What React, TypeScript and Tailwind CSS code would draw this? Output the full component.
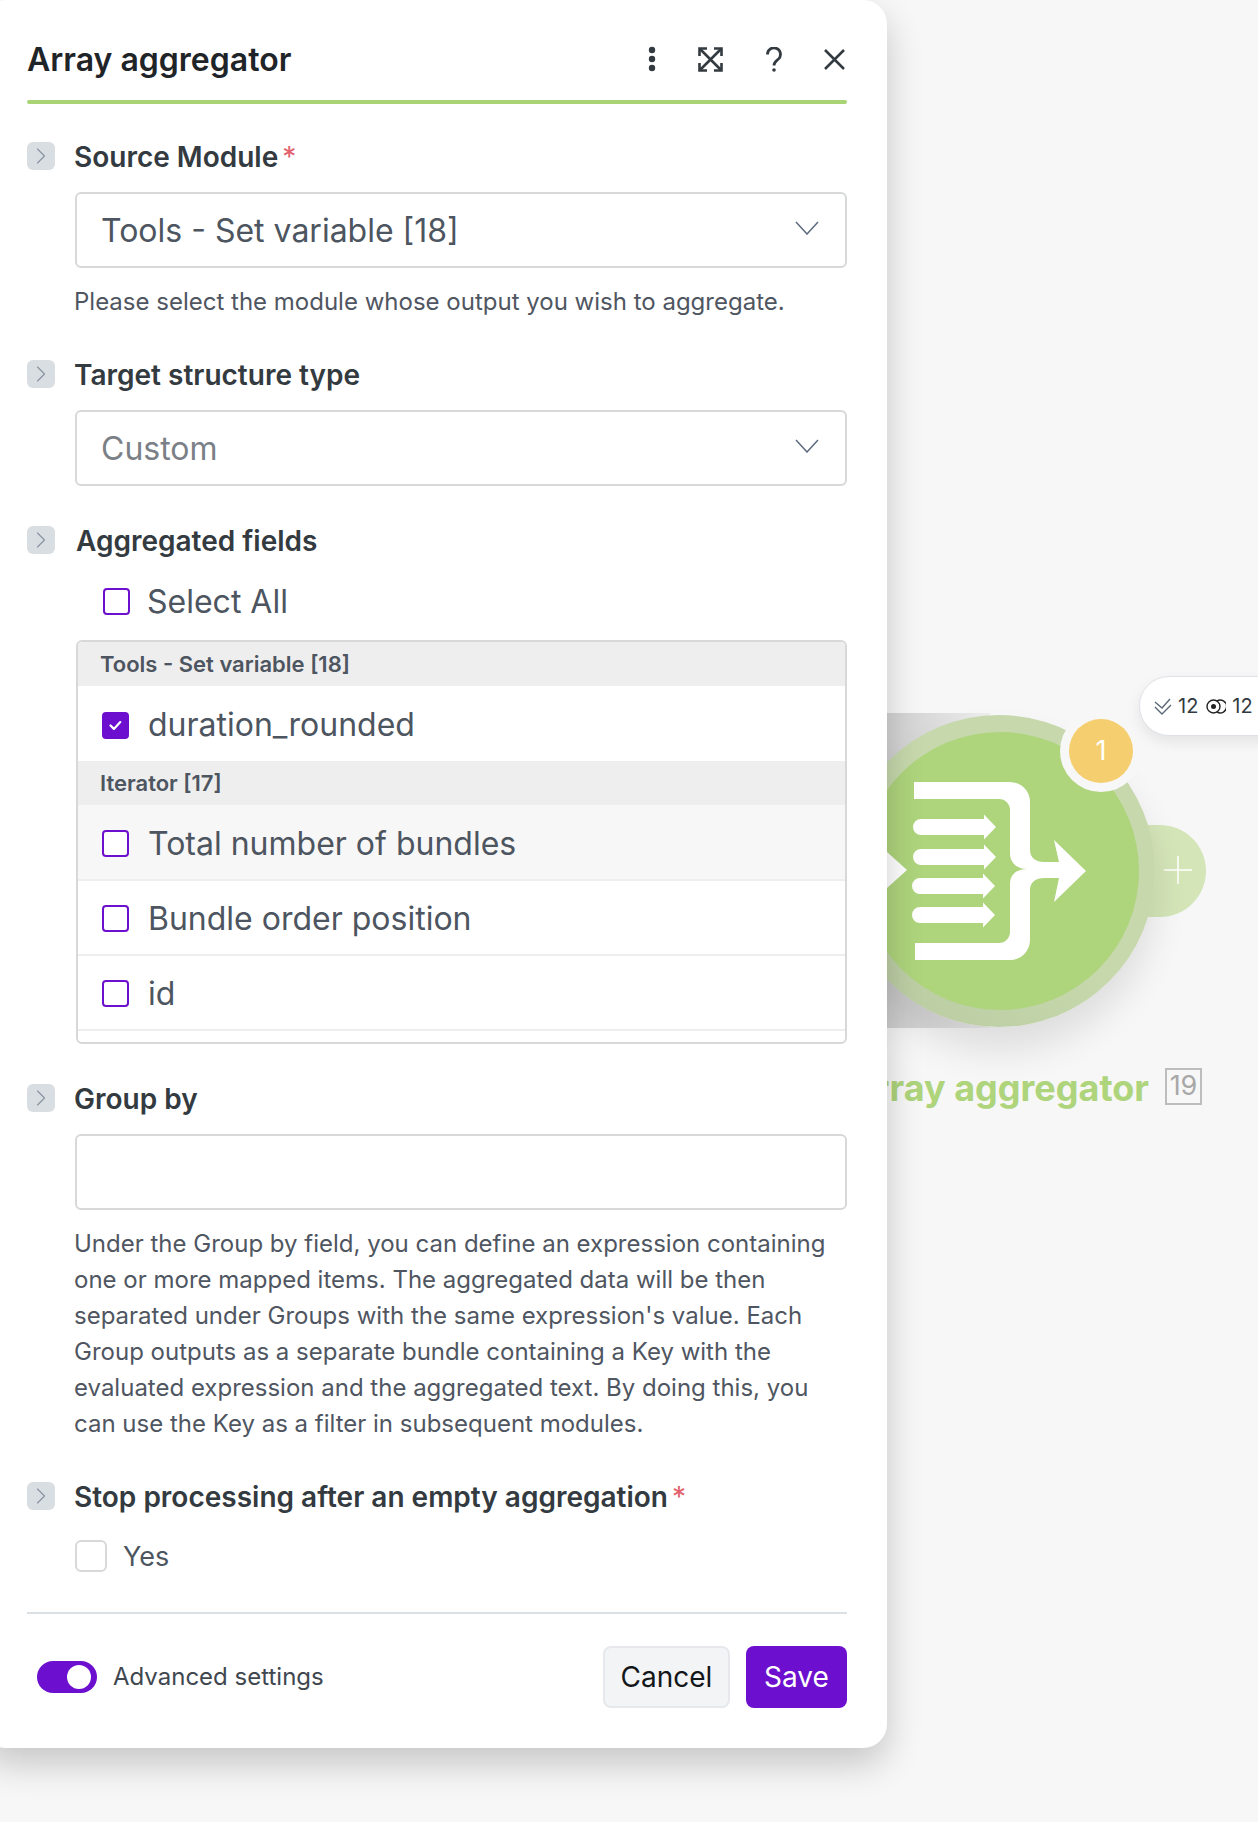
import { ChevronRight, Plus } from 'lucide-react';

const helpText =
  "Under the Group by field, you can define an expression containing one or more mapped items. The aggregated data will be then separated under Groups with the same expression's value. Each Group outputs as a separate bundle containing a Key with the evaluated expression and the aggregated text. By doing this, you can use the Key as a filter in subsequent modules.";

function Tag() {
  return (
    <div className="w-7 h-7 shrink-0 rounded-md bg-[#d9dee3] flex items-center justify-center text-[#8a94a0]">
      <ChevronRight size={28} strokeWidth={1} className="shrink-0" />
    </div>
  );
}

function FieldLabel({ text, required, indent }: { text: string; required?: boolean; indent?: boolean }) {
  return (
    <div className="flex items-center h-7">
      <Tag />
      <span className={`${indent ? 'ml-[21px]' : 'ml-[19px]'} pt-px text-[28px] leading-7 font-semibold text-[#333a40]`}>{text}</span>
      {required && <span className="ml-1 pt-px text-[28px] leading-7 text-[#e2616c]">*</span>}
    </div>
  );
}

function SelectBox({ value, muted }: { value: string; muted?: boolean }) {
  return (
    <div className="ml-12 mt-[22px] h-[76px] rounded-md border-2 border-[#d6d8da] bg-white flex items-center justify-between pl-6 pr-[26px]">
      <span className={`pt-px text-[32px] ${muted ? 'text-[#7b8087]' : 'text-[#4d5560]'}`}>{value}</span>
      <svg className="mb-1" width="24" height="14" viewBox="0 0 24 14" fill="none" stroke="#5b6b7d" strokeWidth="1.5">
        <path d="M1 1l11 12L23 1" />
      </svg>
    </div>
  );
}

function PurpleBox({ checked }: { checked?: boolean }) {
  return (
    <div
      className={`w-[27px] h-[27px] shrink-0 rounded-[4px] border-2 border-[#6d0fce] flex items-center justify-center ${
        checked ? 'bg-[#6d0fce]' : 'bg-white'
      }`}
    >
      {checked && (
        <svg width="17" height="17" viewBox="0 0 17 17" fill="none">
          <path d="M3.5 8.5l3.4 3.4 6.4-6.8" stroke="#fff" strokeWidth="2.2" strokeLinecap="round" strokeLinejoin="round" />
        </svg>
      )}
    </div>
  );
}

function ListRow({ label, checked, tinted, height }: { label: string; checked?: boolean; tinted?: boolean; height: string }) {
  return (
    <div className={`flex items-center gap-[19px] pl-6 ${height} ${tinted ? 'bg-[#f7f7f7]' : 'bg-white'}`}>
      <PurpleBox checked={checked} />
      <span className="text-[32px] text-[#4d5560]">{label}</span>
    </div>
  );
}

function ListHeader({ label }: { label: string }) {
  return (
    <div className="h-[44px] bg-[#eeeeee] flex items-center pl-[22px] text-[22px] font-semibold text-[#4d5560]">{label}</div>
  );
}

function Canvas() {
  return (
    <div className="absolute inset-0">
      <div className="absolute left-[860px] top-[713px] w-[130px] h-[315px] bg-gradient-to-r from-[#cfcfcf] via-[#d9d9d9] to-[#eeeeee]" />
      <div className="absolute left-[1100px] top-[825px] w-[106px] h-[92px] rounded-full bg-[#d4e5b8]" />
      <Plus size={46} strokeWidth={0.8} className="absolute left-[1155px] top-[847px] text-white" />
      <div className="absolute left-[843px] top-[715px] w-[312px] h-[312px] rounded-full bg-gradient-to-tr from-[#b8c9a0] via-[#c6d8ac] to-[#c6d8ac] shadow-[0_24px_36px_rgba(0,0,0,0.1)]" />
      <div className="absolute left-[861px] top-[732px] w-[278px] h-[278px] rounded-full bg-[#aed47c]" />
      {/* aggregator glyph, drawn in page coordinates */}
      <svg className="absolute left-[880px] top-[770px]" width="220" height="200" viewBox="880 770 220 200" fill="#fff">
        <path d="M887 852l20 18-20 18z" />
        <path d="M914 782h96a20 20 0 0 1 20 20v48c0 8 6 12 14 12h15l-5-22 32 31-32 31 5-24h-15c-8 0-14 4-14 12v50a20 20 0 0 1-20 20h-95v-17h84a11 11 0 0 0 11-11v-48c0-9 6-15 17-15-11 0-17-7-17-16v-43a11 11 0 0 0-11-11h-85z" />
        <path d="M921 819h63v-4.5l12 12.5-12 12.5v-4.5h-63a8 8 0 0 1 0-16z" />
        <path d="M921 849h63v-4.5l12 12.5-12 12.5v-4.5h-63a8 8 0 0 1 0-16z" />
        <path d="M920 878h63v-4.5l12 12.5-12 12.5v-4.5h-63a8 8 0 0 1 0-16z" />
        <path d="M920 907h63v-4.5l12 12.5-12 12.5v-4.5h-63a8 8 0 0 1 0-16z" />
      </svg>
      <div className="absolute left-[1060px] top-[710px] w-[82px] h-[82px] rounded-full bg-[#f7f7f7] flex items-center justify-center">
        <div className="w-[64px] h-[64px] rounded-full bg-[#f5cf6f] flex items-center justify-center text-[27px] text-white">1</div>
      </div>
      <div className="absolute left-[1139px] top-[676px] w-[150px] h-[60px] rounded-[30px] border border-[#dfe3e8] bg-white shadow-[0_6px_14px_rgba(0,0,0,0.08)] flex items-center pl-[14px] text-[20px] text-[#333a40]">
        <svg width="18" height="17" viewBox="0 0 18 17" fill="none" stroke="#5a6878" strokeWidth="1.4">
          <path d="M1 4l7 6 8-9" />
          <path d="M1 9l7 7 9-9" />
        </svg>
        <span className="ml-[6px]">12</span>
        <svg className="ml-[8px]" width="20" height="15" viewBox="0 0 20 15" fill="none" stroke="#222" strokeWidth="1.4">
          <circle cx="7.5" cy="7.5" r="6.5" />
          <path d="M11 1.8a6.5 6.5 0 1 1 0 11.4" />
          <circle cx="7.5" cy="7.5" r="2.5" fill="#222" stroke="none" />
        </svg>
        <span className="ml-[6px]">12</span>
      </div>
      <div className="absolute right-[109px] top-[1066px] text-[36px] leading-[44px] font-bold text-[#aed47c] whitespace-nowrap">Array aggregator</div>
      <div className="absolute left-[1165px] top-[1068px] w-[37px] h-[37px] border-2 border-[#bdbdbd] flex items-center justify-center text-[27px] text-[#a8a8a8]">19</div>
    </div>
  );
}

export default function App() {
  return (
    <div className="relative w-[1258px] h-[1822px] overflow-hidden bg-[#f7f7f7] font-['Inter',sans-serif]">
      <Canvas />
      <div className="relative z-10 -ml-[18px] w-[905px] pl-[45px] pr-[40px] pb-10 bg-white rounded-[24px] shadow-[0_16px_36px_rgba(0,0,0,0.2)]">
        <div className="h-[100px] pt-5 flex items-center justify-between text-[#333a40]">
          <h1 className="text-[32px] font-semibold text-[#1f2428]">Array aggregator</h1>
          <div className="flex items-center mr-[2px] mb-[2px]">
            <svg width="8" height="26" viewBox="0 0 8 26" fill="currentColor">
              <circle cx="4" cy="4" r="3.2" />
              <circle cx="4" cy="13" r="3.2" />
              <circle cx="4" cy="22" r="3.2" />
            </svg>
            <svg className="ml-[42px]" width="25" height="25" viewBox="0 0 25 25" fill="none" stroke="currentColor" strokeWidth="2.6">
              <path d="M2 2l21 21M23 2L2 23" />
              <path d="M1.5 9V1.5H9M16 1.5h7.5V9M1.5 16v7.5H9M23.5 16v7.5H16" />
            </svg>
            <svg className="ml-[43px]" width="16" height="25" viewBox="0 0 16 25" fill="none" stroke="currentColor" strokeWidth="2.8">
              <path d="M1.5 7.5a6.5 6.5 0 1 1 10.5 5c-2.5 2-4 2.5-4 6" />
              <circle cx="8" cy="23" r="1.8" fill="currentColor" stroke="none" />
            </svg>
            <svg className="ml-[42px]" width="21" height="21" viewBox="0 0 21 21" fill="none" stroke="currentColor" strokeWidth="2.5">
              <path d="M1 1l19 19M20 1L1 20" />
            </svg>
          </div>
        </div>
        <div className="h-1 rounded-sm bg-[#a8d474]" />

        <div className="mt-[38px]">
          <FieldLabel text="Source Module" required />
          <SelectBox value="Tools - Set variable [18]" />
          <p className="ml-[47px] mt-4 text-[24px] leading-9 text-[#4f5661]">Please select the module whose output you wish to aggregate.</p>
        </div>

        <div className="mt-10">
          <FieldLabel text="Target structure type" />
          <SelectBox value="Custom" muted />
        </div>

        <div className="mt-10">
          <FieldLabel text="Aggregated fields" indent />
          <div className="mt-[34px] ml-[76px] flex items-center gap-[17px] h-[27px]">
            <PurpleBox />
            <span className="text-[32px] text-[#4d5560]">Select All</span>
          </div>
          <div className="mt-[25px] ml-[49px] h-[404px] rounded-md border-2 border-[#d6d8da] overflow-hidden">
            <ListHeader label="Tools - Set variable [18]" />
            <ListRow label="duration_rounded" checked height="h-[75px] pt-[3px]" />
            <ListHeader label="Iterator [17]" />
            <ListRow label="Total number of bundles" tinted height="h-[76px] pt-[3px] border-b-2 border-[#eeeeee]" />
            <ListRow label="Bundle order position" height="h-[75px] pt-[2px] border-b-2 border-[#eeeeee]" />
            <ListRow label="id" height="h-[75px] pt-[2px] border-b-2 border-[#eeeeee]" />
          </div>
        </div>

        <div className="mt-[40px]">
          <FieldLabel text="Group by" />
          <div className="ml-12 mt-[22px] h-[76px] rounded-md border-2 border-[#d6d8da] bg-white" />
          <p className="ml-[47px] mt-4 text-[24px] leading-9 text-[#4f5661]">{helpText}</p>
        </div>

        <div className="mt-10">
          <FieldLabel text="Stop processing after an empty aggregation" required />
          <div className="ml-12 mt-[30px] flex items-center gap-4 h-8">
            <div className="w-8 h-8 rounded-md border-2 border-[#d6d8da] bg-white" />
            <span className="pt-0.5 text-[27px] text-[#4d5560]">Yes</span>
          </div>
        </div>

        <div className="mt-10 h-0.5 bg-[#dbe0e5]" />

        <div className="mt-8 flex items-center justify-between">
          <div className="flex items-center ml-[10px]">
            <div className="w-[60px] h-8 rounded-full bg-[#6d0fce] flex items-center justify-end pr-[6px]">
              <div className="w-[24px] h-[24px] rounded-full bg-white" />
            </div>
            <span className="ml-4 text-[24px] text-[#40474f]">Advanced settings</span>
          </div>
          <div className="flex items-center gap-4">
            <button className="w-[127px] h-[62px] rounded-lg border-2 border-[#e6e8eb] bg-[#f3f4f6] text-[28px] text-[#14171a]">Cancel</button>
            <button className="w-[101px] h-[62px] rounded-lg bg-[#6d0fce] text-[28px] text-white">Save</button>
          </div>
        </div>
      </div>
    </div>
  );
}
